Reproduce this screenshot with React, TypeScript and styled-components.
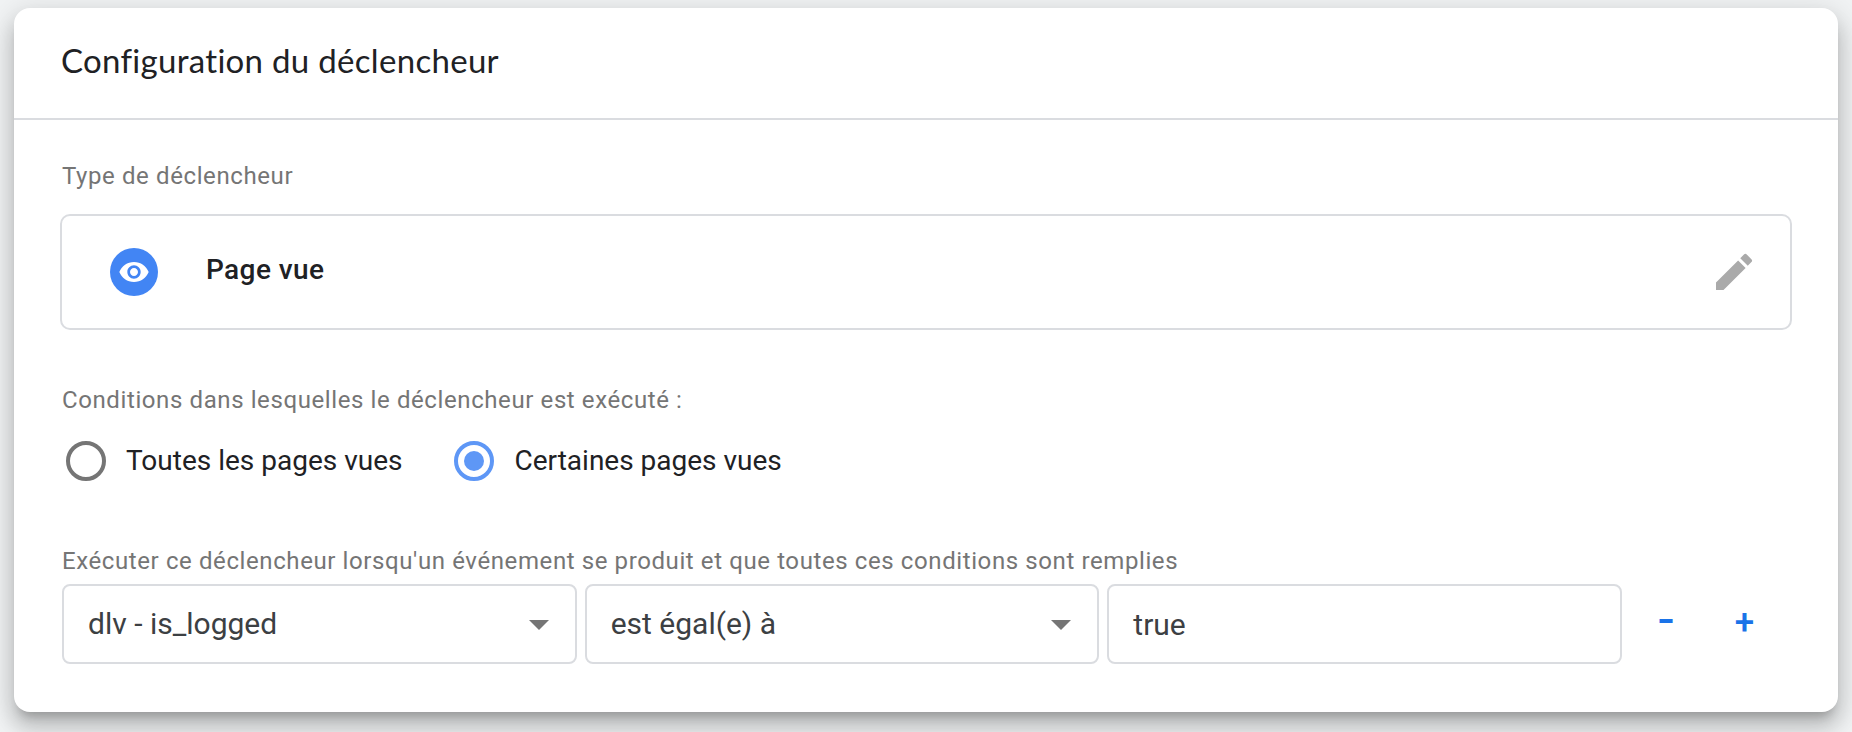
import React, { useState } from "react";
import styled, { createGlobalStyle } from "styled-components";

const GlobalStyle = createGlobalStyle`
  * { box-sizing: border-box; }
  body {
    margin: 0;
    background: #f1f3f4;
    font-family: Roboto, "Liberation Sans", sans-serif;
    color: #202124;
    overflow: hidden;
  }
`;

const Page = styled.main`
  height: 732px;
  padding: 8px 14px 20px;
`;

const Card = styled.section`
  height: 704px;
  background: #fff;
  border-radius: 16px;
  box-shadow:
    0 10px 10px -6px rgba(0, 0, 0, 0.2),
    0 16px 20px 2px rgba(0, 0, 0, 0.14),
    0 6px 28px 4px rgba(0, 0, 0, 0.12);
`;

const CardHeader = styled.header`
  height: 112px;
  padding: 30px 47px 0;
  border-bottom: 2px solid #dadce0;
`;

const Title = styled.h1`
  margin: 0;
  font: 400 33px/44px Lato, sans-serif;
  letter-spacing: 0.3px;
`;

const CardBody = styled.div`
  padding: 40px 46px 0;
`;

const Label = styled.div<{ $top?: number }>`
  margin: ${(p) => p.$top ?? 0}px 0 0 2px;
  font-size: 24px;
  line-height: 32px;
  letter-spacing: 0.6px;
  color: #757575;
  white-space: pre;
`;

const TypeBox = styled.div`
  display: flex;
  align-items: center;
  height: 116px;
  margin-top: 22px;
  padding: 0 32px 0 48px;
  border: 2px solid #dadce0;
  border-radius: 10px;
`;

const TypeIcon = styled.span`
  display: flex;
  align-items: center;
  justify-content: center;
  width: 48px;
  height: 48px;
  border-radius: 50%;
  background: #4285f4;
`;

const TypeName = styled.span`
  flex: 1;
  margin: -4px 0 0 48px;
  font-size: 28px;
  line-height: 36px;
  font-weight: 500;
  letter-spacing: 0.4px;
`;

const RadioGroup = styled.div`
  display: flex;
  height: 40px;
  margin: 25px 0 0 6px;
  gap: 52px;
`;

const RadioOption = styled.label`
  display: flex;
  align-items: center;
  font-size: 28px;
  line-height: 40px;
`;

const RadioMark = styled.span<{ $on: boolean }>`
  display: flex;
  align-items: center;
  justify-content: center;
  width: 40px;
  height: 40px;
  margin-right: 20px;
  border: 4px solid ${(p) => (p.$on ? "#5e97f6" : "#757575")};
  border-radius: 50%;
  &::after {
    content: "";
    width: 20px;
    height: 20px;
    border-radius: 50%;
    background: ${(p) => (p.$on ? "#5e97f6" : "transparent")};
  }
`;

const ConditionRow = styled.div`
  display: flex;
  align-items: center;
  gap: 8px;
  margin: 7px 0 0 2px;
`;

const Field = styled.div<{ $lift?: number }>`
  display: flex;
  align-items: center;
  justify-content: space-between;
  width: 514.67px;
  height: 80px;
  padding: 0 26px ${(p) => p.$lift ?? 0}px 24px;
  border: 2px solid #dadce0;
  border-radius: 8px;
  font-size: 30px;
  color: #3c4043;
`;

const Arrow = styled.span`
  margin-top: 4px;
  border: solid transparent;
  border-width: 10px 10px 0;
  border-top-color: #757575;
`;

const Action = styled.button`
  width: 72px;
  height: 72px;
  padding: 0 3px 2px 0;
  border: 0;
  background: none;
  font: 500 35px/70px Roboto, sans-serif;
  color: #1a73e8;
`;

const RemoveAction = styled(Action)`
  padding: 0 0 8px;
  font-size: 42px;
  line-height: 64px;
  transform: scaleX(1.2);
`;

const options = ["Toutes les pages vues", "Certaines pages vues"];

export default function App() {
  const [selected, setSelected] = useState(1);
  return (
    <Page>
      <GlobalStyle />
      <Card>
        <CardHeader>
          <Title>Configuration du déclencheur</Title>
        </CardHeader>
        <CardBody>
          <Label>Type de déclencheur</Label>
          <TypeBox>
            <TypeIcon>
              <svg width="32" height="32" viewBox="0 0 24 24" fill="#fff">
                <path d="M12 4.5C7 4.5 2.73 7.61 1 12c1.73 4.39 6 7.5 11 7.5s9.27-3.11 11-7.5c-1.73-4.39-6-7.5-11-7.5zM12 17c-2.76 0-5-2.24-5-5s2.24-5 5-5 5 2.24 5 5-2.24 5-5 5zm0-8c-1.66 0-3 1.34-3 3s1.34 3 3 3 3-1.34 3-3-1.34-3-3-3z" />
              </svg>
            </TypeIcon>
            <TypeName>Page vue</TypeName>
            <svg width="48" height="48" viewBox="0 0 24 24" fill="#aaa">
              <path d="M3 17.25V21h3.75L17.81 9.94l-3.75-3.75L3 17.25zM20.71 7.04a.996.996 0 0 0 0-1.41l-2.34-2.34a.996.996 0 0 0-1.41 0l-1.83 1.83 3.75 3.75 1.83-1.83z" />
            </svg>
          </TypeBox>
          <Label $top={54}>Conditions dans lesquelles le déclencheur est exécuté :</Label>
          <RadioGroup>
            {options.map((name, i) => (
              <RadioOption key={name} onClick={() => setSelected(i)}>
                <RadioMark $on={selected === i} />
                {name}
              </RadioOption>
            ))}
          </RadioGroup>
          <Label $top={64}>
            Exécuter ce déclencheur lorsqu'un événement se produit et que toutes ces conditions sont remplies
          </Label>
          <ConditionRow>
            <Field $lift={2}>
              dlv - is_logged
              <Arrow />
            </Field>
            <Field $lift={2}>
              est égal(e) à
              <Arrow />
            </Field>
            <Field>true</Field>
            <RemoveAction>-</RemoveAction>
            <Action>+</Action>
          </ConditionRow>
        </CardBody>
      </Card>
    </Page>
  );
}
